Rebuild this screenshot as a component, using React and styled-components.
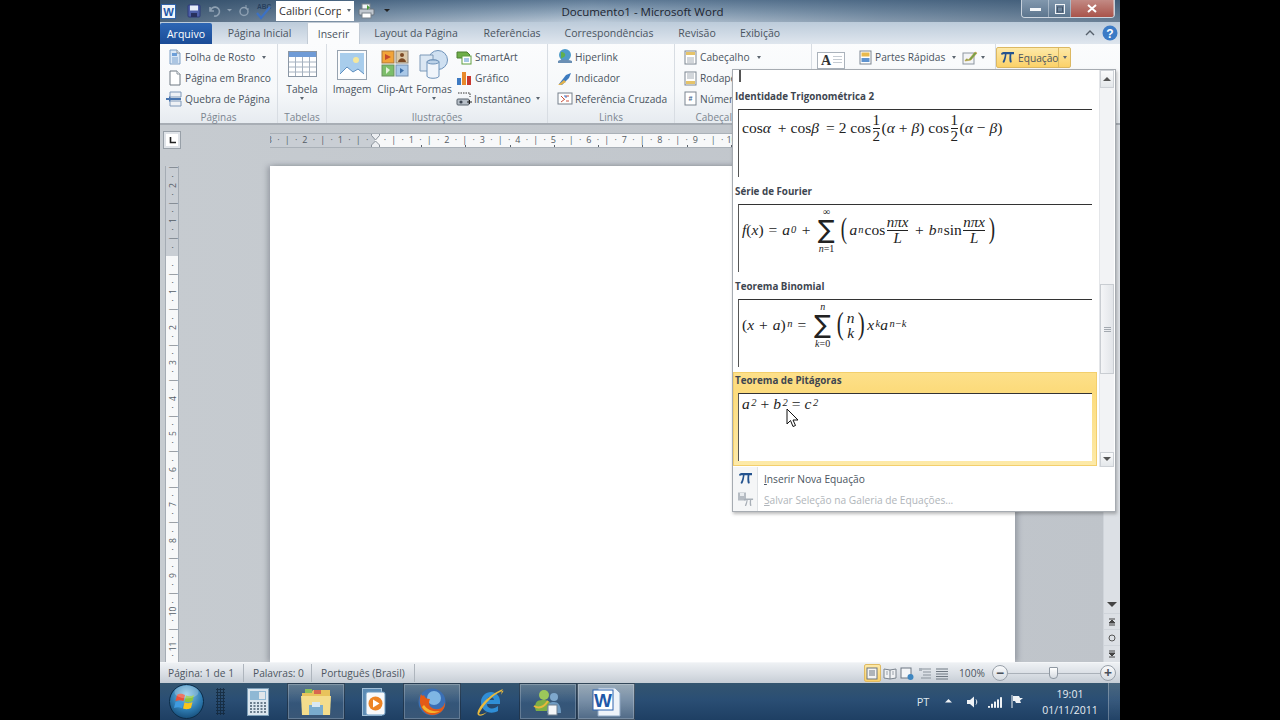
import React from "react";
import styled, { createGlobalStyle } from "styled-components";

const Global = createGlobalStyle`
  html, body { margin: 0; padding: 0; background: #000; }
  #root { width: 1280px; height: 720px; overflow: hidden; }
  * { box-sizing: border-box; }
`;
const Stage = styled.div`width:1280px;height:720px;background:#000;display:flex;justify-content:center;font-family:"Open Sans","Liberation Sans",sans-serif;color:#444c57;`;
const Win = styled.div`position:relative;width:960px;height:720px;display:flex;flex-direction:column;overflow:hidden;background:#c3c8ce;`;

/* Title bar */
const TitleBar = styled.div`height:22px;flex:none;display:flex;align-items:center;position:relative;
  background:linear-gradient(90deg,rgba(40,66,92,.75),rgba(70,96,122,.35) 25%,rgba(225,232,238,.1) 45%,rgba(70,96,122,.45) 75%,rgba(50,76,102,.6)),linear-gradient(180deg,#52708e 0,#8ea5bb 60%,#b9c8d7 100%);`;
const Qat = styled.div`display:flex;align-items:center;height:22px;`;
const QatSlot = styled.div`width:${p=>p.$w||20}px;height:22px;display:flex;align-items:center;justify-content:center;flex:none;`;
const FontBox = styled.div`width:78px;height:20px;background:#fff;color:#333;font-size:11px;display:flex;align-items:center;justify-content:space-between;padding:0 3px;flex:none;white-space:nowrap;margin-bottom:1px;`;
const FontName = styled.span`width:62px;overflow:hidden;`;
const DocTitle = styled.div`flex:1;text-align:center;font-size:11.5px;color:#1c2430;padding-right:132px;padding-top:1px;white-space:nowrap;`;
const WinBtns = styled.div`display:flex;height:18px;align-self:flex-start;margin-right:5px;border:1px solid rgba(240,245,250,.75);border-top:none;border-radius:0 0 4px 4px;overflow:hidden;`;
const WinBtn = styled.div`width:${p=>p.$w}px;display:flex;align-items:center;justify-content:center;
  background:${p=>p.$close?"linear-gradient(180deg,#c28a84,#a9534a)":"linear-gradient(180deg,rgba(150,170,190,.75),rgba(90,115,140,.75))"};border-right:1px solid rgba(240,245,250,.4);`;

/* Tabs */
const TabRow = styled.div`height:22px;flex:none;display:flex;align-items:flex-end;background:linear-gradient(180deg,#bccbda,#dfe6ee);position:relative;`;
const FileTab = styled.div`width:52px;height:21px;background:linear-gradient(180deg,#2d66b4,#1b4c97);color:#fff;font-size:10.5px;display:flex;align-items:center;justify-content:center;border-radius:2px 2px 0 0;flex:none;`;
const Tab = styled.div`height:22px;display:flex;align-items:center;justify-content:center;font-size:10.5px;flex:none;width:${p=>p.$w}px;color:#4a5460;white-space:nowrap;
  ${p=>p.$active&&"background:#fbfcfd;border:1px solid #c2cbd5;border-bottom:none;border-radius:2px 2px 0 0;"}`;
const TabEnd = styled.div`margin-left:auto;display:flex;align-items:center;gap:7px;height:22px;padding-right:2px;`;

/* Ribbon */
const Ribbon = styled.div`height:81px;flex:none;display:flex;background:linear-gradient(180deg,#fbfcfd 0,#f6f8fa 60%,#e6ebf0 100%);border-bottom:2px solid #a8aeb5;`;
const Group = styled.div`width:${p=>p.$w}px;flex:none;display:flex;flex-direction:column;border-right:${p=>p.$last?"none":"1px solid #d8dde3"};`;
const GroupBody = styled.div`flex:1;display:flex;padding:${p=>p.$pad||"3px 0 0 3px"};gap:${p=>p.$gap||0}px;min-height:0;`;
const GroupLabel = styled.div`height:13px;flex:none;text-align:center;font-size:10px;line-height:15px;color:#7b8590;white-space:nowrap;`;
const Stack = styled.div`display:flex;flex-direction:column;flex:none;margin-left:${p=>p.$ml||0}px;`;
const SmallBtn = styled.div`height:20.7px;display:flex;align-items:center;gap:${p=>p.$gap??3}px;margin-left:${p=>p.$ml||0}px;font-size:10.2px;color:#4a5460;white-space:nowrap;`;
const Caret = styled.span`display:inline-block;width:0;height:0;border:2.5px solid transparent;border-top:3px solid #5d6670;border-bottom:none;margin-left:${p=>p.$m??4}px;flex:none;`;
const BigBtn = styled.div`width:${p=>p.$w}px;display:flex;flex-direction:column;align-items:center;font-size:10.2px;color:#4a5460;flex:none;padding-top:3px;`;
const BigLabel = styled.div`height:15px;line-height:15px;margin-top:${p=>p.$mt??2}px;white-space:nowrap;`;
const EqBtn = styled.div`width:75px;height:21px;display:flex;align-items:center;background:linear-gradient(180deg,#fde9a8,#fbd168);border:1px solid #dcb862;border-radius:2px;font-size:10.2px;color:#4a5460;margin-top:3px;`;
const EqMain = styled.div`flex:1;display:flex;align-items:center;gap:3px;padding-left:3px;border-right:1px solid #dcb862;height:100%;white-space:nowrap;`;
const EqArrow = styled.div`width:11px;display:flex;align-items:center;justify-content:center;`;
const Row = styled.div`display:flex;align-items:flex-start;margin:3px 0 0 14px;`;
const TextA = styled.div`width:28px;height:17px;background:#fff;border:1px solid #aab2bb;display:flex;align-items:center;gap:2px;padding-left:3px;font-family:"Liberation Serif",serif;font-weight:bold;font-size:14px;color:#333;margin-top:8px;`;
const Lines = styled.div`width:9px;height:9px;background:repeating-linear-gradient(180deg,#c5cbd2 0 1px,#fff 1px 3px);`;
const PullIcon = styled.span`display:flex;margin-left:-3px;`;

/* Rulers + document */
const Main = styled.div`flex:1;display:flex;min-height:0;background:linear-gradient(90deg,#c6cbd0,#bfc4ca);`;
const MainCol = styled.div`flex:1;display:flex;flex-direction:column;min-width:0;`;
const RulerRow = styled.div`height:41px;flex:none;display:flex;padding-top:6px;`;
const TabStop = styled.div`width:18px;height:18px;margin:0 89px 0 3px;background:#dfe3e8;border:1px solid #98a0a8;padding:2px;flex:none;`;
const TabStopInner = styled.div`width:100%;height:100%;background:#fff;display:flex;align-items:center;justify-content:center;`;
const HRuler = styled.div`width:745px;height:15px;margin-top:2px;display:flex;background:linear-gradient(90deg,#c9ced4 105px,#f7f8f9 105px);border:1px solid #aab1b8;border-width:1px 0;overflow:hidden;position:relative;
  &::after{content:"";position:absolute;left:151px;right:0;bottom:0;height:2px;background:repeating-linear-gradient(90deg,#5b636c 0 1px,transparent 1px 44.3px);}`;
const HCell = styled.div`flex:0 0 8.875px;text-align:center;font-size:9px;line-height:11px;color:#555d66;&:first-child{margin-left:-5px;}`;
const Indent = styled.div`position:absolute;left:101px;top:-1px;width:9px;height:18px;`;
const DocRow = styled.div`flex:1;display:flex;min-height:0;`;
const VRuler = styled.div`width:14px;margin:0 91px 0 5px;flex:none;display:flex;flex-direction:column;background:linear-gradient(180deg,#c9ced4 90px,#f7f8f9 90px);border:1px solid #a5acb4;border-width:0 1px;overflow:hidden;`;
const VCell = styled.div`flex:0 0 8.875px;height:8.875px;display:flex;align-items:center;justify-content:center;font-size:8.5px;color:#555d66;transform:rotate(-90deg);&:first-child{margin-top:-3px;}`;
const Page = styled.div`width:745px;background:#fff;flex:none;box-shadow:-3px 0 5px rgba(90,95,105,.35),3px 0 5px rgba(90,95,105,.35);`;
const VScroll = styled.div`width:17px;flex:none;display:flex;flex-direction:column;justify-content:flex-end;align-items:center;background:#dce0e5;border-left:1px solid #cfd4da;padding-bottom:1px;`;
const ArrowBtn = styled.div`height:22px;width:100%;display:flex;align-items:flex-end;justify-content:center;padding-bottom:5px;`;
const NavBtn = styled.div`height:16px;width:100%;display:flex;align-items:center;justify-content:center;border-top:1px solid #cfd4da;`;

/* Status bar */
const Status = styled.div`height:21px;flex:none;display:flex;align-items:center;background:linear-gradient(180deg,#eef1f4,#d9dee4 55%,#c6cdd5);border-top:1px solid #f4f6f8;font-size:10.2px;color:#4d5661;`;
const StatusCell = styled.div`width:${p=>p.$w}px;height:18px;display:flex;align-items:center;padding-left:${p=>p.$pl||8}px;border-right:1px solid #aeb5bd;white-space:nowrap;flex:none;`;
const StatusRight = styled.div`margin-left:auto;display:flex;align-items:center;height:100%;`;
const ViewBtn = styled.div`width:17.5px;height:18px;display:flex;align-items:center;justify-content:center;${p=>p.$on&&"background:linear-gradient(180deg,#fde9a8,#fbd168);border:1px solid #e0bb63;border-radius:2px;"}`;
const Zoomer = styled.div`display:flex;align-items:center;margin-left:8px;gap:0;padding-right:4px;`;
const ZoomPct = styled.span`width:33px;`;
const ZoomRound = styled.div`width:16px;height:16px;border-radius:50%;background:linear-gradient(180deg,#fafbfc,#d6dbe1);border:1px solid #98a0a9;display:flex;align-items:center;justify-content:center;font-size:14px;line-height:1;color:#48505a;font-weight:bold;`;
const Slider = styled.div`width:92px;height:1px;background:#aab1b9;position:relative;`;
const Thumb = styled.div`position:absolute;left:41px;top:-6px;width:9px;height:12px;background:linear-gradient(180deg,#fff,#d6dbe1);border:1px solid #8f98a2;border-radius:1px 1px 4px 4px;`;

/* Taskbar */
const Taskbar = styled.div`height:37px;flex:none;display:flex;align-items:stretch;background:linear-gradient(180deg,#34556f 0,#2a4e74 45%,#1e3f63 100%);color:#e7edf3;`;
const Orb = styled.div`width:52px;display:flex;align-items:center;justify-content:center;flex:none;`;
const Grip = styled.div`width:9px;flex:none;margin:5px 4px;opacity:.7;background:radial-gradient(circle,#0f2233 1px,transparent 1.2px) 0 0/3px 3px;`;
const TaskBtn = styled.div`width:58px;flex:none;display:flex;align-items:center;justify-content:center;
  ${p=>p.$on&&`background:linear-gradient(180deg,rgba(255,255,255,.22),rgba(255,255,255,.06) 55%,rgba(255,255,255,.12));border:1px solid rgba(15,30,45,.55);box-shadow:inset 0 0 0 1px rgba(255,255,255,.22);`}
  ${p=>p.$word&&"background:linear-gradient(180deg,rgba(255,255,255,.5),rgba(255,255,255,.22));"}`;
const Tray = styled.div`margin-left:auto;display:flex;align-items:center;height:100%;`;
const TrayText = styled.div`font-size:11px;color:#dfe6ed;width:30px;text-align:center;`;
const TraySlot = styled.div`width:${p=>p.$w||22}px;margin-right:${p=>p.$mr||0}px;display:flex;align-items:center;justify-content:center;`;
const Clock = styled.div`width:76px;text-align:center;font-size:10.5px;line-height:16px;color:#e7edf3;`;
const ShowDesk = styled.div`width:12px;height:100%;border-left:1px solid rgba(255,255,255,.28);background:linear-gradient(180deg,rgba(255,255,255,.1),rgba(255,255,255,.02));`;

/* Equation popup */
const Popup = styled.div`position:absolute;left:572px;top:69px;width:384px;height:443px;background:#fff;border:1px solid #a6abb1;box-shadow:1px 2px 3px rgba(60,60,60,.35);display:flex;flex-direction:column;color:#333;`;
const GalleryWrap = styled.div`height:397px;flex:none;display:flex;padding-right:1px;`;
const Gallery = styled.div`flex:1;display:flex;flex-direction:column;min-width:0;`;
const TopStub = styled.div`height:20px;flex:none;padding-left:6px;`;
const StubLine = styled.div`width:1.5px;height:12px;background:#555;`;
const GalItem = styled.div`height:${p=>p.$h||95}px;flex:none;margin-right:3px;display:flex;flex-direction:column;padding:0 0 0 2px;`;
const HotItem = styled(GalItem)`border:1px solid #f3cf6c;background:linear-gradient(180deg,#fde08a,#fcdb7c 16px,#fdeaa9 100%);margin-top:-2px;height:94px;padding-left:1px;`;
const GalTitle = styled.div`height:14px;flex:none;font-size:9.8px;font-weight:700;color:#3e4650;line-height:13px;white-space:nowrap;margin:${p=>p.$mt||0}px 0 5px;`;
const EqBox = styled.div`height:68px;flex:none;margin:0 ${p=>p.$mr||5}px 0 ${p=>p.$ml||3}px;border-top:1.5px solid #333;border-left:1.5px solid #555;background:#fff;padding-left:3px;display:flex;align-items:flex-start;`;
const MathLine = styled.div`display:flex;align-items:center;font-family:"Liberation Serif",serif;font-size:15.5px;color:#222;height:${p=>p.$h}px;white-space:nowrap;`;
const I = styled.i`font-style:italic;padding-right:${p=>p.$pr||0}px;`;
const Op = styled.span`padding:0 ${p=>p.$p??4}px;`;
const Sup = styled.sup`font-size:10.5px;line-height:0;position:relative;top:-1px;vertical-align:super;font-style:italic;padding-left:1.5px;`;
const Sub = styled.sub`font-size:10.5px;line-height:0;vertical-align:sub;font-style:italic;padding:0 1px;`;
const Frac = styled.span`display:inline-flex;flex-direction:column;align-items:center;padding:0 1.5px;font-size:15px;line-height:15px;`;
const FracBar = styled.span`align-self:stretch;height:1px;background:#222;`;
const Sum = styled.span`display:inline-flex;flex-direction:column;align-items:center;line-height:1;margin:0 3px;`;
const Lim = styled.span`font-size:10px;line-height:9px;`;
const SumSign = styled.span`font-family:"DejaVu Sans",sans-serif;font-size:25px;line-height:28px;`;
const BigParen = styled.span`font-size:${p=>p.$s||29}px;font-weight:200;line-height:1;position:relative;top:-2px;margin:0 1px;transform:scaleX(.65);display:inline-block;`;
const Binom = styled.span`display:inline-flex;flex-direction:column;align-items:center;line-height:15px;font-style:italic;`;
const PopScroll = styled.div`width:15px;flex:none;display:flex;flex-direction:column;background:#f2f3f5;border-left:1px solid #e4e6e9;margin-left:-1px;`;
const ScBtn = styled.div`height:${p=>p.$h}px;flex:none;background:linear-gradient(180deg,#fafbfc,#e4e7ea);border:1px solid #cdd1d6;display:flex;align-items:center;justify-content:center;`;
const ScSpace = styled.div`flex:1;display:flex;flex-direction:column;justify-content:flex-end;padding-bottom:78px;`;
const ScThumb = styled.div`height:90px;background:linear-gradient(90deg,#f4f5f7,#e2e5e9);border:1px solid #c9cdd2;display:flex;align-items:center;justify-content:center;`;
const Grip3 = styled.div`width:7px;height:5px;background:repeating-linear-gradient(180deg,#a3a9b0 0 1px,transparent 1px 2px);`;
const Foot = styled.div`flex:1;display:flex;flex-direction:column;padding-top:1px;background:linear-gradient(90deg,#f5f6f7 24px,#dfe2e5 24px,#dfe2e5 25px,#fff 25px);`;
const FootRow = styled.div`height:21px;display:flex;align-items:center;font-size:10.2px;color:${p=>p.$off?"#b0b5ba":"#4a5460"};`;
const FootIcon = styled.div`width:25px;display:flex;justify-content:center;flex:none;`;
const FootText = styled.div`padding-left:6px;white-space:nowrap;`;
const U = styled.span`text-decoration:underline;`;
const Cursor = styled.svg`position:absolute;left:53px;top:338px;`;

/* icons */
const S = ({w=16,h=16,children,...r}) => <svg width={w} height={h} viewBox={`0 0 ${w} ${h}`} {...r}>{children}</svg>;
const WordIc = ({s=16}) => <svg width={s} height={s} viewBox="0 0 16 16"><rect x=".5" y=".5" width="15" height="15" fill="#f2f6fb" stroke="#2b5fa8"/><text x="8" y="12.5" textAnchor="middle" fontFamily="Liberation Sans" fontWeight="700" fontSize="12" fill="#1f58a8">W</text></svg>;
const Save = () => <S w={14} h={14}><rect x="1" y="1" width="12" height="12" rx="1" fill="#4d5fa8" stroke="#2c3a78"/><rect x="3" y="1.5" width="8" height="5" fill="#e8eef8"/><rect x="4" y="9" width="6" height="4" fill="#28305e"/></S>;
const Undo = ({c="#8ea0b2"}) => <S w={14} h={14}><path d="M3 3v4h4M3.5 7A4.5 4.5 0 1 1 7 12" fill="none" stroke={c} strokeWidth="1.6"/></S>;
const Redo = () => <S w={12} h={14}><circle cx="6" cy="7.5" r="4" fill="none" stroke="#8ea0b2" strokeWidth="1.5"/><path d="M8 1v4h3" fill="none" stroke="#8ea0b2"/></S>;
const Spell = () => <S w={18} h={18}><text x="2" y="7" fontSize="6.5" fontWeight="700" fontFamily="Liberation Sans" fill="#27405f">ABC</text><path d="M2 11l4 5 9-11" fill="none" stroke="#3c71c4" strokeWidth="2.2"/></S>;
const Printer = () => <S w={17} h={16}><rect x="4" y="1" width="8" height="6" fill="#f3f5f7" stroke="#7a838c"/><rect x="1" y="6" width="15" height="6" rx="1" fill="#c0c7cf" stroke="#69727c"/><rect x="4" y="10" width="9" height="5" fill="#fff" stroke="#7a838c"/><path d="M9 2l3 2.5L9 7z" fill="#4b9a3a"/></S>;
const Tri = ({c="#444",up,sz=4}) => <S w={sz*2} h={sz+1}><path d={up?`M0 ${sz}L${sz} 0L${sz*2} ${sz}z`:`M0 0L${sz*2} 0L${sz} ${sz}z`} fill={c}/></S>;
const DocIc = ({kind}) => <S w={14} h={16}>
  <path d="M2 1h7l3 3v11H2z" fill={kind==="blank"?"#fff":"#dbe8f6"} stroke={kind==="blank"?"#6f7882":"#7fa0c6"}/>
  <path d="M9 1v3h3" fill="#fff" stroke="#8a939c"/>
  {kind==="cover"&&<><rect x="4" y="4" width="5" height="3" fill="#6e9fd8"/><path d="M4 9h6M4 11h6M4 13h6" stroke="#7da3cf"/></>}
</S>;
const PageBreak = () => <S w={20} h={16}><path d="M5 1h11v5H5zM5 10h11v5H5z" fill="#eef1f5" stroke="#7f98b8"/><path d="M1 8h15" stroke="#4a76b0" strokeWidth="2"/><path d="M4 5l3 3-3 3" fill="#4a76b0"/></S>;
const TableIc = () => <S w={29} h={26}><rect x=".5" y=".5" width="28" height="25" fill="#fff" stroke="#8b97a5"/><rect x="1" y="1" width="27" height="5" fill="#6f9bd6"/><path d="M1 11h27M1 16h27M1 21h27M7.5 6v19M14.5 6v19M21.5 6v19" stroke="#a6b2c0"/></S>;
const ImageIc = () => <S w={30} h={30}><rect x=".5" y=".5" width="29" height="29" fill="#fbfcfd" stroke="#97a3b0"/><rect x="3" y="3" width="24" height="24" fill="#a8cdec"/><circle cx="19" cy="10" r="3" fill="#f5e79c"/><path d="M3 24l7-7 6 5 5-3 6 5v3H3z" fill="#fff"/><path d="M3 24l7-7 6 5 5-3 6 5" fill="none" stroke="#5f8fc0"/></S>;
const ClipIc = () => <S w={28} h={27}><rect x="1" y="1" width="12" height="12" fill="#f2a43a" stroke="#a9793d"/><path d="M4 4l6 3-6 3z" fill="#c64a2d"/><rect x="15" y="1" width="12" height="12" fill="#dbc9a9" stroke="#8d8578"/><circle cx="21" cy="5" r="2" fill="#7b4a25"/><path d="M17 12c1-5 7-5 8 0z" fill="#7b4a25"/><rect x="1" y="15" width="12" height="11" fill="#7cbe6a" stroke="#6b9161"/><path d="M5 17l4 3-4 4z" fill="#e3f2da"/><rect x="15" y="15" width="12" height="11" fill="#a9c8e8" stroke="#7692b3"/><path d="M19 18l4 2.5-4 3z" fill="#3e6fa8"/></S>;
const ShapesIc = () => <S w={30} h={30}><circle cx="19" cy="10" r="9.5" fill="#cfe0f1" stroke="#6f93ba"/><path d="M1 5h13v16H1z" fill="#dbe7f3" stroke="#7d99b8"/><path d="M8 12c0-3 12-3 12 0v14c0 3-12 3-12 0z" fill="#f0f5fb" stroke="#6f93ba"/><ellipse cx="14" cy="12" rx="6" ry="2" fill="#bcd2e8" stroke="#6f93ba"/></S>;
const SmartIc = () => <S w={17} h={15}><path d="M1 2h10l3 3-3 3H1z" fill="#6fae4a" stroke="#4d7e33"/><rect x="6" y="6" width="9" height="8" fill="#fff" stroke="#5f9e41"/><path d="M8 9h5M8 11h5" stroke="#4f8fcf"/></S>;
const ChartIc = () => <S w={16} h={16}><rect x="1" y="8" width="4" height="7" fill="#3d7ac2"/><rect x="6" y="2" width="4" height="13" fill="#e8892b"/><rect x="11" y="6" width="4" height="9" fill="#c8372e"/></S>;
const SnapIc = () => <S w={17} h={14}><rect x="1" y="7" width="12" height="6" rx="1" fill="#b7bfc8" stroke="#59626c"/><circle cx="5" cy="10" r="1.6" fill="#3b4450"/><path d="M2 1h12v4" fill="none" stroke="#333" strokeDasharray="1.5 1"/><path d="M11 10h5M13.5 8v4" stroke="#222"/></S>;
const HyperIc = () => <S w={16} h={16}><circle cx="8" cy="6" r="6" fill="#4f9bc9"/><path d="M4 3c3 0 5 2 4 4s-3 1-4 3" fill="#5fb04d"/><path d="M1 12c3-2 9-2 14 0v2H1z" fill="#6a8fb4"/></S>;
const BookmarkIc = () => <S w={16} h={15}><path d="M2 13L9 4l5-2-2 5-7 7z" fill="#3d7bc0"/><path d="M1 14l6-5 2 2-5 3z" fill="#e3b24b"/></S>;
const CrossRefIc = () => <S w={16} h={15}><rect x="1" y="2" width="14" height="11" fill="#fff" stroke="#76808b"/><path d="M4 5l3 3M4 11l4-3M9 5h3M9 10h3" stroke="#c8503c"/><path d="M7 5h2v2" stroke="#3c71c4" fill="none"/></S>;
const HeadIc = ({v}) => <S w={13} h={15}><rect x="1" y="1" width="11" height="13" fill="#fff" stroke="#7c8691"/>
  {v==="h"&&<><rect x="2" y="2" width="9" height="3" fill="#e5c36a"/><path d="M3 8h7M3 10h7M3 12h7" stroke="#a5adb6"/></>}
  {v==="f"&&<><rect x="2" y="10" width="9" height="3" fill="#e5c36a"/><path d="M3 3h7M3 5h7M3 7h7" stroke="#a5adb6"/></>}
  {v==="n"&&<text x="6.5" y="10" textAnchor="middle" fontSize="7" fontWeight="700" fill="#3a5d8c" fontFamily="Liberation Sans">#</text>}</S>;
const PartsIc = () => <S w={13} h={15}><rect x="1" y="1" width="11" height="13" fill="#fff" stroke="#7c8691"/><rect x="2.5" y="2.5" width="8" height="4" fill="#e9b94c"/><rect x="2.5" y="8" width="8" height="4" fill="#5f93cf"/></S>;
const SigIc = () => <S w={16} h={15}><rect x="1" y="3" width="11" height="11" fill="#f2f4f6" stroke="#8d96a0"/><path d="M3 11c2-5 3 1 5-3l5-6 2 1-6 7z" fill="#6da24c" stroke="#cc9a36" strokeWidth=".6"/></S>;
const PiPath = "M1 3.5C2 2 3 2 4.5 2H14v2.2h-2.6c-.3 2.2-.3 5 .3 7.3.2.8-1 1.5-1.8.7-.7-1.5-.6-5.3-.3-8H6.5c-.4 3-1 6-2 8-.7.9-2.2.4-1.8-.6C3.8 9.5 4.6 6.8 4.9 4.2 3.3 4.1 2.4 4.3 1.7 5z";
const PiIc = ({c="#24538f",w=15,h=15}) => <svg width={w} height={h} viewBox="0 0 15 15"><path d={PiPath} fill={c}/></svg>;
const SavePi = () => <S w={17} h={16}><rect x="1" y=".5" width="8" height="8" fill="#b6bcc3"/><rect x="3" y="1" width="4" height="3" fill="#e9ecef"/><path transform="translate(6 5) scale(.72)" d={PiPath} fill="#a8afb7"/></S>;
const DocView = ({k}) => <S w={14} h={13}>
  {k==="print"&&<><rect x="2" y="1" width="10" height="11" fill="#f4f4f2" stroke="#6b7480"/><path d="M4 4h6M4 6h6M4 8h6" stroke="#6b7480"/></>}
  {k==="read"&&<><path d="M1 2l6 1 6-1v9l-6 1-6-1z" fill="#f0f2f4" stroke="#7a838d"/><path d="M7 3v9" stroke="#7a838d"/><path d="M3 5h2M3 7h2M9 5h2M9 7h2" stroke="#9aa2ab"/></>}
  {k==="web"&&<><rect x="1" y="1" width="10" height="10" fill="#f3f5f7" stroke="#6c7681"/><circle cx="10.5" cy="10" r="3" fill="#3e86c0"/></>}
  {k==="outline"&&<><path d="M3 2h10M5 5h8M5 8h8M3 11h10" stroke="#8a939c"/><rect x="1" y="1" width="3" height="3" fill="#aab2ba"/></>}
  {k==="draft"&&<path d="M1 2h12M1 4.5h12M1 7h12M1 9.5h12M1 12h12" stroke="#6f7882"/>}
</S>;

/* taskbar logos */
const StartOrb = () => <S w={37} h={37}><defs><radialGradient id="o" cx=".5" cy=".3" r=".8"><stop offset="0" stopColor="#8fcbe8"/><stop offset=".55" stopColor="#2f7db3"/><stop offset="1" stopColor="#0e3d66"/></radialGradient></defs><circle cx="18.5" cy="18.5" r="17" fill="url(#o)" stroke="#0c2c48"/><path d="M9 12c3-2 5-1 8 0l-1.5 6c-3-1-5-1-8 0z" fill="#e8503a"/><path d="M18 12.5c3 1 5 1 8-.5l-1.5 6c-3 1.5-5 1.5-8 .5z" fill="#8cc63f"/><path d="M7.5 19c3-1 5-1 8 0l-1.5 6c-3-1-5-1-8 0z" fill="#3f9be0"/><path d="M16.5 19.5c3 1 5 1 8-.5l-1.5 6c-3 1.5-5 1.5-8 .5z" fill="#f9c51d"/><ellipse cx="18.5" cy="9" rx="12" ry="6.5" fill="#fff" opacity=".22"/></S>;
const CalcIc = () => <S w={22} h={28}><rect x=".5" y=".5" width="21" height="27" fill="#dbe6ef" stroke="#7d9fb8"/><rect x="3" y="3" width="16" height="9" fill="#8fb8d4"/><rect x="12" y="4" width="6" height="7" fill="#e0e6ea"/><path d="M3 15h16M3 18h16M3 21h16M3 24h16" stroke="#6a7c8c" strokeDasharray="2 1.5" strokeWidth="2"/></S>;
const FolderIc = () => <S w={32} h={30}><path d="M2 6h9l2-3h17v10H2z" fill="#e8c35c"/><rect x="5" y="2" width="7" height="4" fill="#8bbf5a"/><rect x="14" y="3" width="7" height="4" fill="#d9674f"/><path d="M1 9h30l-1 19H2z" fill="#f4dd8c"/><rect x="9" y="18" width="14" height="10" fill="#7aaccd"/><rect x="12" y="15" width="8" height="5" fill="#d8e8f2"/></S>;
const MediaIc = () => <S w={24} h={28}><rect x=".5" y=".5" width="19" height="27" fill="#5c8bb4" stroke="#a2c0d8"/><rect x="4" y="4" width="19" height="23" rx="2" fill="#f7f9fb" stroke="#6b9ac2"/><circle cx="13.5" cy="15.5" r="7" fill="#ed8424"/><path d="M11 11.5l6.5 4-6.5 4z" fill="#fff"/></S>;
const FoxIc = () => <S w={30} h={30}><circle cx="15" cy="15" r="13.5" fill="#3a6fb5"/><circle cx="17" cy="11" r="7" fill="#7fb6e4"/><path d="M4 7c-3 8 0 20 11 21 9 0 14-7 13-13-1 5-5 8-10 7-6-1-7-6-5-10-3 0-5-1-6-4-1 1-2 1-3-1z" fill="#e35a17"/><path d="M5 20c3 6 12 8 18 4-5 1-12 0-16-6z" fill="#f5b52c"/></S>;
const IEIc = () => <S w={30} h={30}><path d="M6 15c0-6 5-10 10-10s9 4 9 9v3H12c0 5 7 6 11 2v5c-7 4-17 1-17-9zm6-2h7c0-4-7-4-7 0z" fill="#2f8ed6"/><path d="M3 28C0 24 12 8 28 2c-2 3-1 3-2 6C28 4 30 3 27 4 15 9 6 22 4 27c1 1 5 0 8-2-3 3-7 5-9 3z" fill="#e8b93e"/></S>;
const MsnIc = () => <S w={30} h={28}><circle cx="11" cy="7" r="5" fill="#9cc75a"/><path d="M2 20c0-8 4-8 9-8s8 3 8 8v3H3z" fill="#7eaf45"/><circle cx="21" cy="9" r="4" fill="#7fa8cc"/><path d="M14 25c0-10 3-11 7-11s7 3 7 11z" fill="#6f9bc2"/><rect x="15" y="17" width="9" height="10" fill="#f4f6f8" stroke="#6e7e8e"/><path d="M1 18c5 3 10 1 14-5" fill="none" stroke="#e9b73a" strokeWidth="2"/></S>;
const WordTask = () => <S w={29} h={30}><path d="M6 1h17l5 5v23H6z" fill="#eef3f9" stroke="#8fa8c4"/><rect x="1" y="3" width="20" height="20" fill="#fff" stroke="#2c62ad" strokeWidth="1"/><text x="11" y="20" textAnchor="middle" fontFamily="Liberation Sans" fontWeight="700" fontSize="19" fill="#1f58a8">W</text></S>;

const Spk = () => <S w={14} h={14}><path d="M1 5h3l4-3.5v11L4 9H1z" fill="#f0f3f6"/><path d="M10 4.5c1 1 1 4 0 5" stroke="#f0f3f6" fill="none"/></S>;
const Net = () => <S w={16} h={12}>{[0,1,2,3,4].map(i=><rect key={i} x={i*3+1} y={10-i*2.2} width="2" height={1.8+i*2.2} fill="#eef2f5"/>)}</S>;
const Flag = () => <S w={14} h={15}><path d="M2 1v13" stroke="#f0f3f6"/><path d="M3 2h6l1 2h3l-3 2.5L11 9H6L5 7H3z" fill="#f0f3f6"/></S>;

const ticks = (total, offset) => Array.from({length: total}, (_, i) => {
  const k = i - offset;
  if (k % 4 === 0) { const n = Math.abs(k/4); return n === 0 ? "" : String(n); }
  return k % 2 === 0 ? "|" : "·";
});

const Frc = ({n,d}) => <Frac><span>{n}</span><FracBar/><span>{d}</span></Frac>;

export default function App() {
  return (
    <Stage>
      <Global/>
      <Win>
        <TitleBar>
          <Qat>
            <QatSlot $w={16}><WordIc s={15}/></QatSlot>
            <QatSlot $w={9}/>
            <QatSlot $w={18}><Save/></QatSlot>
            <QatSlot $w={22}><Undo/></QatSlot>
            <QatSlot $w={9}><Tri c="#8ea0b2" sz={2.5}/></QatSlot>
            <QatSlot $w={20}><Redo/></QatSlot>
            <QatSlot $w={20}><Spell/></QatSlot>
            <QatSlot $w={2}/>
            <FontBox><FontName>Calibri (Corpo</FontName><Caret $m={1}/></FontBox>
            <QatSlot $w={24}><Printer/></QatSlot>
            <QatSlot $w={18}><Tri c="#222" sz={3}/></QatSlot>
          </Qat>
          <DocTitle>Documento1  -  Microsoft Word</DocTitle>
          <WinBtns>
            <WinBtn $w={27}><S w={11} h={4}><rect width="11" height="3" y="1" fill="#f4f6f8"/></S></WinBtn>
            <WinBtn $w={22}><S w={10} h={10}><rect x=".5" y=".5" width="9" height="9" fill="none" stroke="#f0f3f6"/><rect x="2.5" y="3" width="5" height="5" fill="none" stroke="#45556a"/></S></WinBtn>
            <WinBtn $w={43} $close><S w={10} h={9}><path d="M1 1l8 7M9 1L1 8" stroke="#fff" strokeWidth="2"/></S></WinBtn>
          </WinBtns>
        </TitleBar>
        <TabRow>
          <FileTab>Arquivo</FileTab>
          <Tab $w={95}>Página Inicial</Tab>
          <Tab $w={53} $active>Inserir</Tab>
          <Tab $w={112}>Layout da Página</Tab>
          <Tab $w={80}>Referências</Tab>
          <Tab $w={114}>Correspondências</Tab>
          <Tab $w={62}>Revisão</Tab>
          <Tab $w={64}>Exibição</Tab>
          <TabEnd>
            <S w={10} h={8}><path d="M1 6l4-4 4 4" fill="none" stroke="#56606b" strokeWidth="1.4"/></S>
            <S w={16} h={16}><circle cx="8" cy="8" r="7.5" fill="#3c7bc6"/><text x="8" y="12.5" textAnchor="middle" fontSize="12" fontWeight="700" fill="#fff" fontFamily="Liberation Sans">?</text></S>
          </TabEnd>
        </TabRow>
        <Ribbon>
          <Group $w={118}>
            <GroupBody $pad="3px 0 0 8px">
              <Stack>
                <SmallBtn $gap={3}><DocIc kind="cover"/>Folha de Rosto<Caret/></SmallBtn>
                <SmallBtn $gap={3}><DocIc kind="blank"/>Página em Branco</SmallBtn>
                <SmallBtn $gap={0}><PullIcon><PageBreak/></PullIcon>Quebra de Página</SmallBtn>
              </Stack>
            </GroupBody>
            <GroupLabel>Páginas</GroupLabel>
          </Group>
          <Group $w={49}>
            <GroupBody $pad="4px 0 0 0"><BigBtn $w={48}><TableIc/><BigLabel $mt={5}>Tabela</BigLabel><Caret $m={0}/></BigBtn></GroupBody>
            <GroupLabel>Tabelas</GroupLabel>
          </Group>
          <Group $w={221}>
            <GroupBody $pad="3px 0 0 3px">
              <BigBtn $w={44}><ImageIc/><BigLabel>Imagem</BigLabel></BigBtn>
              <BigBtn $w={42}><ClipIc/><BigLabel $mt={5}>Clip-Art</BigLabel></BigBtn>
              <BigBtn $w={36}><ShapesIc/><BigLabel>Formas</BigLabel><Caret $m={0}/></BigBtn>
              <Stack $ml={4}>
                <SmallBtn $gap={2}><SmartIc/>SmartArt</SmallBtn>
                <SmallBtn $gap={3}><ChartIc/>Gráfico</SmallBtn>
                <SmallBtn $gap={1}><SnapIc/>Instantâneo<Caret/></SmallBtn>
              </Stack>
            </GroupBody>
            <GroupLabel>Ilustrações</GroupLabel>
          </Group>
          <Group $w={127}>
            <GroupBody $pad="3px 0 0 9px">
              <Stack>
                <SmallBtn $gap={2}><HyperIc/>Hiperlink</SmallBtn>
                <SmallBtn $gap={2}><BookmarkIc/>Indicador</SmallBtn>
                <SmallBtn $gap={2}><CrossRefIc/>Referência Cruzada</SmallBtn>
              </Stack>
            </GroupBody>
            <GroupLabel>Links</GroupLabel>
          </Group>
          <Group $w={137}>
            <GroupBody $pad="3px 0 0 9px">
              <Stack>
                <SmallBtn $gap={3}><HeadIc v="h"/>Cabeçalho<Caret/></SmallBtn>
                <SmallBtn $gap={3}><HeadIc v="f"/>Rodapé<Caret/></SmallBtn>
                <SmallBtn $gap={3}><HeadIc v="n"/>Número de Página<Caret/></SmallBtn>
              </Stack>
            </GroupBody>
            <GroupLabel>Cabeçalho e Rodapé</GroupLabel>
          </Group>
          <Group $w={184}>
            <GroupBody $pad="0 0 0 5px">
              <TextA>A<Lines/></TextA>
              <Row>
                <SmallBtn $gap={3}><PartsIc/>Partes Rápidas<Caret/></SmallBtn>
                <SmallBtn $gap={2} $ml={6}><SigIc/><Caret $m={1}/></SmallBtn>
              </Row>
            </GroupBody>
            <GroupLabel/>
          </Group>
          <Group $w={80} $last>
            <GroupBody $pad="0">
              <EqBtn><EqMain><PiIc/>Equação</EqMain><EqArrow><Caret $m={0}/></EqArrow></EqBtn>
            </GroupBody>
          </Group>
        </Ribbon>
        <Main>
          <MainCol>
            <RulerRow>
              <TabStop><TabStopInner><S w={7} h={7}><path d="M1.5 0v5.5H7" fill="none" stroke="#222" strokeWidth="1.6"/></S></TabStopInner></TabStop>
              <HRuler>
                {ticks(53,12).map((t,i)=><HCell key={i}>{t}</HCell>)}
                <Indent><S w={9} h={18}><path d="M.5 .5h8v2L4.5 7 .5 2.5z" fill="#eceef1" stroke="#8a929b"/><path d="M4.5 8L.5 12v5.5h8V12z" fill="#eceef1" stroke="#8a929b"/></S></Indent>
              </HRuler>
            </RulerRow>
            <DocRow>
              <VRuler>
                {ticks(56,10).map((t,i)=><VCell key={i}>{t}</VCell>)}
              </VRuler>
              <Page/>
            </DocRow>
          </MainCol>
          <VScroll>
            <ArrowBtn><Tri c="#444" sz={5}/></ArrowBtn>
            <NavBtn><S w={8} h={8}><path d="M1 1h6M4 2l3 3H1z" stroke="#444" fill="#444"/><path d="M1 7h6" stroke="#444"/></S></NavBtn>
            <NavBtn><S w={8} h={8}><circle cx="4" cy="4" r="3" fill="none" stroke="#555"/></S></NavBtn>
            <NavBtn><S w={8} h={8}><path d="M1 1h6M4 6l3-3H1z" stroke="#444" fill="#444"/><path d="M1 7h6" stroke="#444"/></S></NavBtn>
          </VScroll>
        </Main>
        <Status>
          <StatusCell $w={84}>Página: 1 de 1</StatusCell>
          <StatusCell $w={68} $pl={9}>Palavras: 0</StatusCell>
          <StatusCell $w={103} $pl={9}>Português (Brasil)</StatusCell>
          <StatusRight>
            <ViewBtn $on><DocView k="print"/></ViewBtn>
            <ViewBtn><DocView k="read"/></ViewBtn>
            <ViewBtn><DocView k="web"/></ViewBtn>
            <ViewBtn><DocView k="outline"/></ViewBtn>
            <ViewBtn><DocView k="draft"/></ViewBtn>
            <Zoomer>
              <ZoomPct>100%</ZoomPct>
              <ZoomRound>−</ZoomRound>
              <Slider><Thumb/></Slider>
              <ZoomRound>+</ZoomRound>
            </Zoomer>
          </StatusRight>
        </Status>
        <Taskbar>
          <Orb><StartOrb/></Orb>
          <Grip/>
          <TaskBtn><CalcIc/></TaskBtn>
          <TaskBtn $on><FolderIc/></TaskBtn>
          <TaskBtn><MediaIc/></TaskBtn>
          <TaskBtn $on><FoxIc/></TaskBtn>
          <TaskBtn><IEIc/></TaskBtn>
          <TaskBtn $on><MsnIc/></TaskBtn>
          <TaskBtn $on $word><WordTask/></TaskBtn>
          <Tray>
            <Grip/>
            <TrayText>PT</TrayText>
            <TraySlot $w={20} $mr={4}><Tri c="#eef2f5" up sz={3.5}/></TraySlot>
            <TraySlot><Spk/></TraySlot>
            <TraySlot><Net/></TraySlot>
            <TraySlot $mr={4}><Flag/></TraySlot>
            <Clock>19:01<br/>01/11/2011</Clock>
            <ShowDesk/>
          </Tray>
        </Taskbar>

        <Popup>
          <GalleryWrap>
            <Gallery>
              <TopStub><StubLine/></TopStub>
              <GalItem>
                <GalTitle>Identidade Trigonométrica 2</GalTitle>
                <EqBox><MathLine $h={36}>cos<I $pr={3}>α</I><Op>+</Op>cos<I $pr={3}>β</I><Op>=</Op>2 cos<Frc n="1" d="2"/>(<I>α</I><Op>+</Op><I>β</I>) cos<Frc n="1" d="2"/>(<I>α</I><Op>−</Op><I>β</I>)</MathLine></EqBox>
              </GalItem>
              <GalItem>
                <GalTitle>Série de Fourier</GalTitle>
                <EqBox><MathLine $h={50}><I>f</I>(<I>x</I>)<Op $p={5}>=</Op><I>a</I><Sub>0</Sub><Op $p={4.5}>+</Op><Sum><Lim>∞</Lim><SumSign>∑</SumSign><Lim><I>n</I>=1</Lim></Sum><BigParen>(</BigParen><I>a</I><Sub>n</Sub> cos<Frc n={<I>nπx</I>} d={<I>L</I>}/><Op $p={5}>+</Op><I>b</I><Sub>n</Sub> sin<Frc n={<I>nπx</I>} d={<I>L</I>}/><BigParen>)</BigParen></MathLine></EqBox>
              </GalItem>
              <GalItem $h={94}>
                <GalTitle>Teorema Binomial</GalTitle>
                <EqBox><MathLine $h={50}>(<I>x</I><Op $p={5}>+</Op><I>a</I>)<Sup>n</Sup><Op $p={5}>=</Op><Sum><Lim><I>n</I></Lim><SumSign>∑</SumSign><Lim><I>k</I>=0</Lim></Sum><BigParen $s={32}>(</BigParen><Binom><span>n</span><span>k</span></Binom><BigParen $s={32}>)</BigParen><I>x</I><Sup>k</Sup><I>a</I><Sup>n−k</Sup></MathLine></EqBox>
              </GalItem>
              <HotItem>
                <GalTitle $mt={1}>Teorema de Pitágoras</GalTitle>
                <EqBox $ml={3} $mr={4}><MathLine $h={20}><I>a</I><Sup>2</Sup><Op>+</Op><I>b</I><Sup>2</Sup><Op>=</Op><I>c</I><Sup>2</Sup></MathLine></EqBox>
              </HotItem>
            </Gallery>
            <PopScroll>
              <ScBtn $h={18}><Tri c="#555" up sz={4}/></ScBtn>
              <ScSpace><ScThumb><Grip3/></ScThumb></ScSpace>
              <ScBtn $h={15}><Tri c="#555" sz={4}/></ScBtn>
            </PopScroll>
          </GalleryWrap>
          <Foot>
            <FootRow><FootIcon><PiIc/></FootIcon><FootText><U>I</U>nserir Nova Equação</FootText></FootRow>
            <FootRow $off><FootIcon><SavePi/></FootIcon><FootText><U>S</U>alvar Seleção na Galeria de Equações...</FootText></FootRow>
          </Foot>
          <Cursor width="14" height="21" viewBox="0 0 14 21"><path d="M1 1v15l3.5-3.5L7 18.5l2.5-1-2.5-5.5h5z" fill="#fff" stroke="#111"/></Cursor>
        </Popup>
      </Win>
    </Stage>
  );
}
